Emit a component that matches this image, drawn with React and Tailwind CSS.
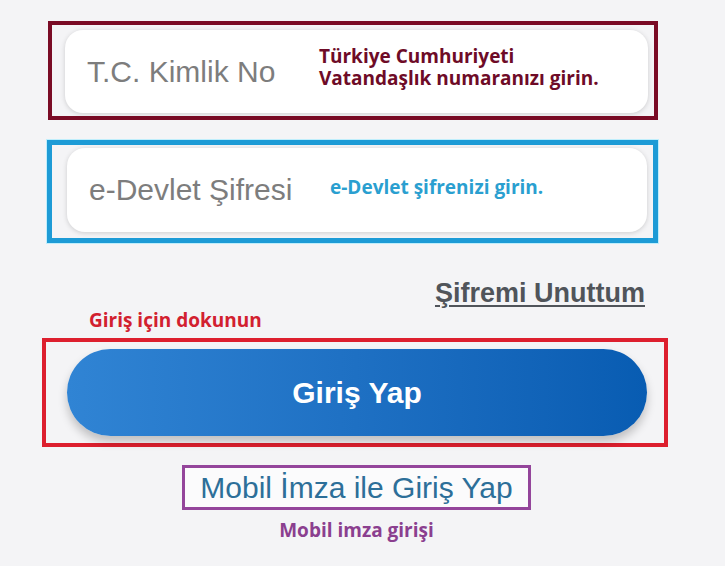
import React from "react";

const sans = { fontFamily: '"Liberation Sans", Arial, sans-serif' };
const note = { fontFamily: '"Open Sans", "Noto Sans", sans-serif' };

function Field({ label, children }) {
  return (
    <div className="relative flex h-full w-full items-center rounded-[18px] bg-white pl-[22px] shadow-[0_1px_5px_rgba(0,0,0,0.16)]">
      <span className="text-[30px] leading-none text-[#7d7d7d]" style={sans}>
        {label}
      </span>
      {children}
    </div>
  );
}

export default function App() {
  return (
    <div className="h-[566px] w-[725px] overflow-hidden bg-[#f4f4f6] pt-[21px]">
      {/* TC number field */}
      <div className="ml-[48px] h-[99px] w-[610px] border-[4px] border-[#7a0b25] pb-[3px] pl-[13px] pr-[6px] pt-[5px]">
        <Field label="T.C. Kimlik No">
          <div
            className="absolute left-[254px] top-[15px] text-[19px] font-bold leading-[22px] text-[#6e0b27]"
            style={note}
          >
            Türkiye Cumhuriyeti
            <br />
            Vatandaşlık numaranızı girin.
          </div>
        </Field>
      </div>

      {/* password field */}
      <div className="ml-[47px] mt-[20px] h-[103px] w-[611px] border-[5px] border-[#1d9bd6] pb-[6px] pl-[15px] pr-[6px] pt-[3px] shadow-[0_0_0_1px_#bfeefc]">
        <Field label="e-Devlet Şifresi">
          <div
            className="absolute left-[263px] top-[28px] text-[19px] font-bold leading-[22px] text-[#2a9fd0]"
            style={note}
          >
            e-Devlet şifrenizi girin.
          </div>
        </Field>
      </div>

      {/* forgot password */}
      <div className="ml-[66px] mt-[35px] flex h-[30px] w-[579px] justify-end">
        <a
          href="#"
          className="text-[27px] font-bold leading-[30px] text-[#50545a] underline decoration-[2px] underline-offset-[3px]"
          style={sans}
        >
          Şifremi Unuttum
        </a>
      </div>

      <div
        className="ml-[89px] mt-[2px] h-[20px] text-[19px] font-bold leading-[20px] text-[#d2202f]"
        style={note}
      >
        Giriş için dokunun
      </div>

      {/* login button */}
      <div className="ml-[42px] mt-[8px] h-[109px] w-[626px] border-[4px] border-[#dd1f2e] pb-[7px] pl-[21px] pr-[17px] pt-[7px]">
        <button
          className="flex h-full w-full items-center justify-center rounded-full bg-gradient-to-r from-[#3084d4] to-[#085cb2] text-[30px] font-bold text-white shadow-[0_6px_10px_rgba(0,0,0,0.22)]"
          style={sans}
        >
          Giriş Yap
        </button>
      </div>

      {/* mobile signature */}
      <div className="ml-[66px] mt-[18px] flex w-[581px] flex-col items-center">
        <div className="flex h-[45px] w-[349px] items-center justify-center border-[3px] border-[#94459b] bg-[#fbfbfc]">
          <span className="text-[30px] leading-none text-[#2d6f99]" style={sans}>
            Mobil İmza ile Giriş Yap
          </span>
        </div>
        <div
          className="mt-[10px] h-[20px] text-[19px] font-bold leading-[20px] text-[#8b3f8f]"
          style={note}
        >
          Mobil imza girişi
        </div>
      </div>
    </div>
  );
}
